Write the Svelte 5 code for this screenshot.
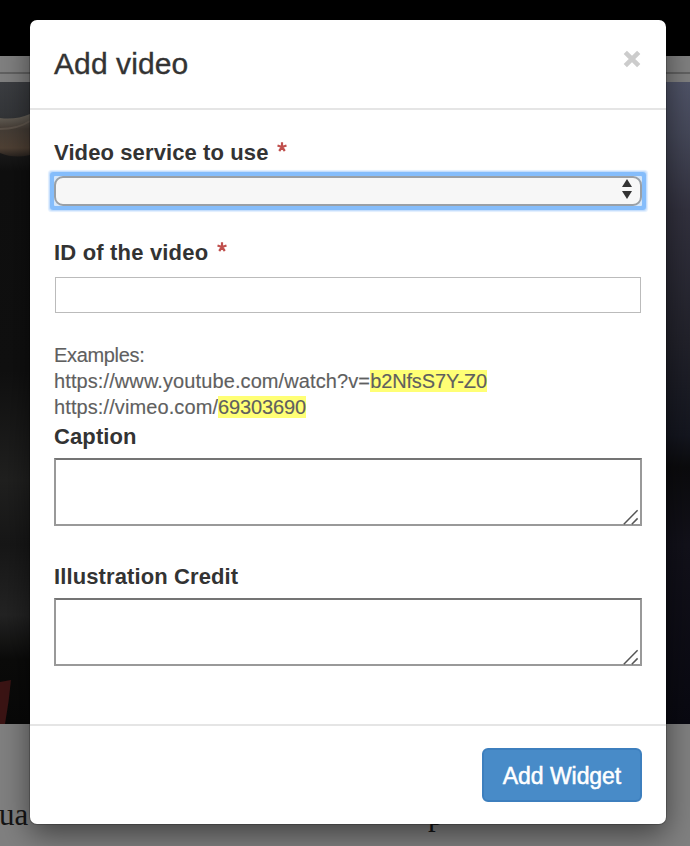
<script>
  let service = $state('');
  let videoId = $state('');
  let caption = $state('');
  let credit = $state('');
</script>

{#snippet grip()}
  <svg class="grip" width="16" height="16" viewBox="0 0 16 16">
    <path d="M0.8 15.2 14.6 1.2M8.8 15.2 14.6 9.4" fill="none" stroke="#555" stroke-width="1.5" />
  </svg>
{/snippet}

{#snippet required()}
  <svg class="required" width="10" height="10" viewBox="0 0 10 10" aria-label="required">
    <path d="M5 5V.2M5 5 .5 3.5M5 5 9.5 3.5M5 5 2.2 9M5 5 7.8 9" stroke="#c0504d" stroke-width="2.2" />
  </svg>
{/snippet}

<div class="page">
  <div class="topbar"></div>
  <div class="rule"></div>
  <svg class="photo" width="690" height="642" viewBox="0 0 690 642">
    <defs>
      <linearGradient id="left" x1="0" y1="0" x2="0" y2="1">
        <stop offset="0" stop-color="#3b3d41" />
        <stop offset=".05" stop-color="#343639" />
        <stop offset=".11" stop-color="#1a1a1a" />
        <stop offset=".14" stop-color="#0f0f0f" />
        <stop offset=".45" stop-color="#101010" />
        <stop offset=".62" stop-color="#20201f" />
        <stop offset=".72" stop-color="#171717" />
        <stop offset=".83" stop-color="#232323" />
        <stop offset=".9" stop-color="#0b0b0a" />
        <stop offset="1" stop-color="#080808" />
      </linearGradient>
      <linearGradient id="right" x1="0" y1="0" x2="0" y2="1">
        <stop offset="0" stop-color="#4f5367" />
        <stop offset=".08" stop-color="#454859" />
        <stop offset=".2" stop-color="#32313e" />
        <stop offset=".4" stop-color="#22222b" />
        <stop offset=".55" stop-color="#14161f" />
        <stop offset=".6" stop-color="#0b0b0d" />
        <stop offset=".72" stop-color="#12111a" />
        <stop offset="1" stop-color="#090911" />
      </linearGradient>
      <linearGradient id="rope" x1="0" y1="0" x2="0" y2="1">
        <stop offset="0" stop-color="#6b665d" />
        <stop offset=".35" stop-color="#443c35" />
        <stop offset=".8" stop-color="#4e4034" />
        <stop offset="1" stop-color="#29231f" />
      </linearGradient>
    </defs>
    <rect width="345" height="642" fill="url(#left)" />
    <rect x="345" width="345" height="642" fill="url(#right)" />
    <path d="M0 36Q16 38 30 32V73Q14 77 0 71Z" fill="url(#rope)" />
    <path d="M0 47Q18 47 30 39" stroke="#7a6f61" stroke-width="2" opacity=".4" fill="none" />
    <path d="M0 600 11 598Q9 620 5 642H0Z" fill="#3b1414" />
  </svg>
  <div class="story"><span class="frag">ua</span><span class="frag tail">p</span></div>

  <div class="modal" role="dialog" aria-label="Add video">
    <header>
      <h1>Add video</h1>
      <button class="close" aria-label="Close">
        <svg width="18" height="18" viewBox="0 0 18 18"><path d="M2.3 2.3 15.7 15.7M15.7 2.3 2.3 15.7" stroke="#ccc" stroke-width="4.6" /></svg>
      </button>
    </header>
    <main>
      <label for="service">Video service to use {@render required()}</label>
      <div class="focus">
        <select id="service" bind:value={service}><option value=""></option></select>
        <svg class="arrows" width="10" height="20" viewBox="0 0 10 20"><path d="M5 0 10 8H0ZM0 12H10L5 20Z" fill="#333" /></svg>
      </div>
      <label class="wide" for="video">ID of the video {@render required()}</label>
      <input id="video" bind:value={videoId} />
      <div class="help">
        <span class="intro">Examples:</span><br />
        https://www.youtube.com/watch?v=<mark class="yt">b2NfsS7Y-Z0</mark><br />
        https://vimeo.com/<mark class="vm">69303690</mark>
      </div>
      <label for="caption">Caption</label>
      <div class="area"><textarea id="caption" bind:value={caption}></textarea>{@render grip()}</div>
      <label for="credit">Illustration Credit</label>
      <div class="area"><textarea id="credit" bind:value={credit}></textarea>{@render grip()}</div>
    </main>
    <footer><button class="primary">Add Widget</button></footer>
  </div>
</div>

<style>
  :global(body) { margin: 0; }
  .page {
    position: relative;
    box-sizing: border-box;
    width: 690px;
    height: 846px;
    overflow: hidden;
    background: #808080;
    font-family: "Liberation Sans", Arial, sans-serif;
  }
  .topbar { height: 56px; background: #000; }
  .rule { height: 26px; box-sizing: border-box; border-top: 16px solid #808080; background: linear-gradient(#616161 2px, #808080 2px); }
  .photo { display: block; }
  .story { display: flex; padding-top: 67px; color: #151515; font: 31px/48px "Liberation Serif", serif; }
  .frag { width: 427px; margin-left: -1px; }
  .tail { width: auto; margin-left: 2px; }
  .modal {
    position: absolute;
    left: 30px;
    top: 20px;
    display: flex;
    flex-direction: column;
    width: 636px;
    height: 804px;
    border-radius: 7px;
    background: #fff;
    box-shadow: 0 0 0 1px rgba(0, 0, 0, .2), 0 10px 30px rgba(0, 0, 0, .5);
  }
  header {
    display: flex;
    justify-content: space-between;
    box-sizing: border-box;
    height: 90px;
    padding: 0 24px;
    border-bottom: 2px solid #e5e5e5;
  }
  h1 { margin: 23px 0 0; color: #333; font-size: 30px; font-weight: 400; line-height: 42px; letter-spacing: .1px; -webkit-text-stroke: .35px #333; }
  .close { display: flex; align-self: flex-start; margin: 30px 1px 0 0; padding: 0; border: 0; background: none; }
  main { display: flex; flex-direction: column; box-sizing: border-box; height: 614px; padding: 28px 24px 0; }
  label { display: block; box-sizing: border-box; height: 28px; padding-top: 1px; color: #333; font-size: 22px; font-weight: 700; line-height: 27px; letter-spacing: .11px; white-space: nowrap; }
  .wide { letter-spacing: .18px; }
  .required { position: relative; top: -1px; margin-left: 2px; vertical-align: 7px; }
  .focus {
    position: relative;
    display: flex;
    height: 30px;
    margin: 10px 0 32px;
    border-radius: 1px;
    background: #d5e7fa;
    box-shadow: 0 0 0 4px #85bdfb, 0 0 0 5px #c5defc, 0 0 1px 6px #e0eefe;
  }
  select { appearance: none; flex: 1; box-sizing: border-box; height: 30px; padding: 0; border: 2px solid #9aa0a6; border-radius: 9px; background: #f7f7f7; outline: 0; }
  .arrows { position: absolute; right: 10px; top: 3px; }
  input { box-sizing: border-box; height: 36px; margin: 11px 1px 29px; padding: 0 8px; border: 1px solid #bbb; background: #fff; font-size: 20px; }
  .help { height: 80px; color: #5f5f5f; font-size: 20px; line-height: 26px; letter-spacing: .1px; white-space: nowrap; -webkit-text-stroke: .15px #5f5f5f; }
  .intro { letter-spacing: -.33px; }
  mark { padding: 0; color: #5f5f5f; background: linear-gradient(#ffff75, #ffff75) 0 0 / 100% 22px no-repeat; }
  .yt { letter-spacing: -.13px; }
  .vm { letter-spacing: -.13px; }
  .area { position: relative; display: flex; height: 68px; margin: 8px 0 36px; }
  textarea { box-sizing: border-box; width: 100%; height: 68px; margin: 0; padding: 4px; border: 2px solid #999; border-top-color: #747474; border-radius: 0; background: #fff; resize: none; outline: 0; font-size: 20px; }
  .grip { position: absolute; right: 3px; bottom: 1px; }
  footer { display: flex; justify-content: flex-end; box-sizing: border-box; height: 100px; padding: 22px 24px; border-top: 2px solid #e5e5e5; }
  .primary {
    box-sizing: border-box;
    width: 160px;
    height: 54px;
    padding: 2px 0 0;
    border: 2px solid #3d7fbe;
    border-radius: 6px;
    background: #488bc8;
    color: #fff;
    font-family: inherit;
    font-size: 23px;
    letter-spacing: -.05px;
    -webkit-text-stroke: .5px #fff;
  }
</style>
